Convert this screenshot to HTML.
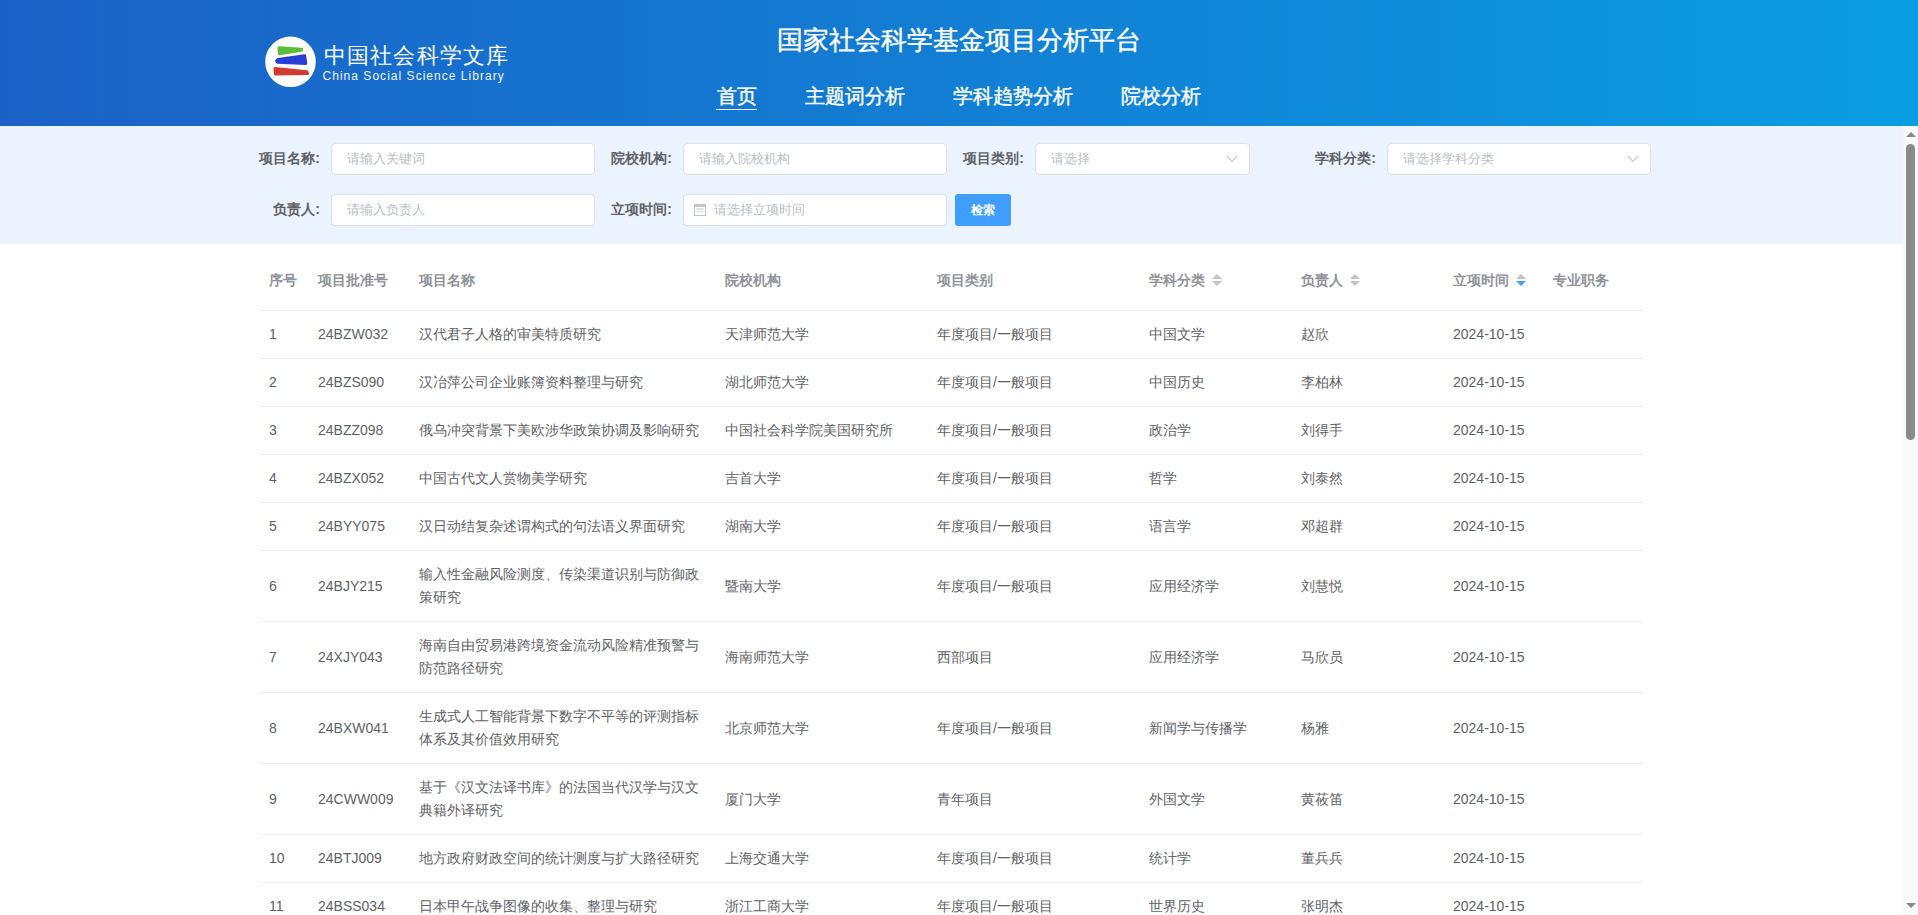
<!DOCTYPE html>
<html><head><meta charset="utf-8">
<style>
*{margin:0;padding:0;box-sizing:border-box}
html,body{width:1918px;height:915px;overflow:hidden;background:#fff;font-family:"Liberation Sans",sans-serif}
.hdr{position:absolute;left:0;top:0;width:1918px;height:126px;background:linear-gradient(90deg,#1b60c6 0%,#0a9de3 100%)}
.logo{position:absolute;left:260px;top:30px;width:70px;height:65px}
.lt1{position:absolute;left:324px;top:41px;font-size:22px;color:#fff;white-space:nowrap;letter-spacing:1.15px}
.lt2{position:absolute;left:322.5px;top:68.5px;font-size:12px;color:#eef4fb;white-space:nowrap;letter-spacing:1.03px}
.title{position:absolute;left:0;width:1918px;top:22.5px;-webkit-text-stroke:0.4px #fff;text-align:center;font-size:26px;color:#fff;white-space:nowrap}
.nav{position:absolute;top:82.5px;font-size:20px;color:#fff;white-space:nowrap;-webkit-text-stroke:0.4px #fff}
.nav.act:after{content:"";position:absolute;left:-1px;right:0;top:26px;height:1.5px;background:#fff}
.main{position:absolute;left:0;top:126px;width:1903px;height:789px;overflow:hidden}
.flt{position:absolute;left:0;top:0;width:1903px;height:118px;background:#ebf3ff}
.lab{position:absolute;font-size:14px;font-weight:bold;color:#606266;white-space:nowrap;text-align:right}
.inp{position:absolute;height:32px;background:#fff;border:1px solid #dcdfe6;border-radius:4px;font-size:13px;color:#b9bdc5;white-space:nowrap;line-height:30px;padding-left:15px}
.btn{position:absolute;height:32px;background:#409eff;border-radius:3px;color:#fff;font-size:12px;font-weight:bold;text-align:center;line-height:32px}
.sbu{position:absolute;left:2.5px;top:5.5px;border:5px solid transparent;border-top:0;border-bottom:5px solid #8a8a8a}
.sbd{position:absolute;left:2.5px;bottom:7.5px;border:5px solid transparent;border-bottom:0;border-top:5px solid #8a8a8a}
.sbt{position:absolute;left:3px;top:18px;width:9px;height:296px;border-radius:5px;background:#8a8a8a}
.sb{position:absolute;left:1903px;top:126px;width:15px;height:789px;background:#f9f9f9}
table{position:absolute;left:259px;top:125px;border-collapse:separate;border-spacing:0;width:1384px;font-size:14px;color:#606266;table-layout:fixed}
th{height:60px;box-sizing:border-box;text-align:left;color:#909399;font-weight:bold;border-bottom:1px solid #ebeef5;padding:0 10px;vertical-align:middle;white-space:nowrap}
td{text-align:left;border-bottom:1px solid #ebeef5;padding:12px 10px;line-height:23px;vertical-align:middle}
.arr{position:absolute;right:11px;top:11px}
.cal{position:absolute;left:10px;top:8px}
.sort{display:inline-block;position:relative;width:10px;height:14px;margin-left:7px;vertical-align:middle}
.sort:before{content:"";position:absolute;left:0;top:0;border:5px solid transparent;border-top:0;border-bottom:5px solid #c0c4cc}
.sort:after{content:"";position:absolute;left:0;top:7px;border:5px solid transparent;border-bottom:0;border-top:5px solid #c0c4cc}
.sort.on:after{border-top-color:#409eff}
</style></head><body>
<div class="hdr">
<svg class="logo" viewBox="0 0 70 65">
<circle cx="30.5" cy="31.8" r="25.3" fill="#fff"/>
<g stroke-linejoin="round" stroke-width="3">
<path d="M18.9 17.8 L41.6 19.2 L41.3 20.2 L19.5 23.8 Z" fill="#5dbe3e" stroke="#5dbe3e"/>
<path d="M18 29.6 L44.6 25.7 L45.8 33.6 L17.5 32.2 Q15.6 30.9 18 29.6 Z" fill="#2a3ed6" stroke="#2a3ed6"/>
<path d="M15 38.5 L47 41.8 L47.5 43.6 L15.3 44 Z" fill="#d23b2f" stroke="#d23b2f"/>
</g>
</svg>
<div class="lt1">中国社会科学文库</div>
<div class="lt2">China Social Science Library</div>
<div class="title">国家社会科学基金项目分析平台</div>
<div class="nav act" style="left:717px">首页</div>
<div class="nav" style="left:805px">主题词分析</div>
<div class="nav" style="left:953px">学科趋势分析</div>
<div class="nav" style="left:1121px">院校分析</div>
</div>
<div class="main">
<div class="flt">
<div class="lab" style="right:1583px;top:24px">项目名称:</div>
<div class="inp" style="left:331px;top:17px;width:264px">请输入关键词</div>
<div class="lab" style="right:1231px;top:24px">院校机构:</div>
<div class="inp" style="left:683px;top:17px;width:264px">请输入院校机构</div>
<div class="lab" style="right:879px;top:24px">项目类别:</div>
<div class="inp" style="left:1035px;top:17px;width:215px">请选择<svg class="arr" width="12" height="8" viewBox="0 0 12 8"><polyline points="0.7,1 6,6.3 11.3,1" stroke="#c0c4cc" stroke-width="1.1" fill="none"/></svg></div>
<div class="lab" style="right:527px;top:24px">学科分类:</div>
<div class="inp" style="left:1387px;top:17px;width:264px">请选择学科分类<svg class="arr" width="12" height="8" viewBox="0 0 12 8"><polyline points="0.7,1 6,6.3 11.3,1" stroke="#c0c4cc" stroke-width="1.1" fill="none"/></svg></div>
<div class="lab" style="right:1583px;top:75px">负责人:</div>
<div class="inp" style="left:331px;top:68px;width:264px">请输入负责人</div>
<div class="lab" style="right:1231px;top:75px">立项时间:</div>
<div class="inp" style="left:683px;top:68px;width:264px;padding-left:30px"><svg class="cal" width="13" height="13" viewBox="0 0 13 13"><rect x="0.5" y="1.5" width="11" height="11" fill="none" stroke="#c0c4cc" stroke-width="1"/><rect x="0.5" y="1.5" width="11" height="2.5" fill="#c0c4cc"/><line x1="3" y1="0.5" x2="3" y2="2" stroke="#c0c4cc"/><line x1="9" y1="0.5" x2="9" y2="2" stroke="#c0c4cc"/><rect x="2.5" y="5.5" width="7" height="1" fill="#c0c4cc"/><rect x="2.5" y="8" width="7" height="1.2" fill="#d8dbe0"/></svg>请选择立项时间</div>
<div class="btn" style="left:955px;top:68px;width:56px">检索</div>
</div>
<table cellspacing="0" cellpadding="0">
<colgroup><col style="width:49px"><col style="width:101px"><col style="width:306px"><col style="width:212px"><col style="width:212px"><col style="width:152px"><col style="width:152px"><col style="width:100px"><col style="width:100px"></colgroup>
<thead><tr><th>序号</th><th>项目批准号</th><th>项目名称</th><th>院校机构</th><th>项目类别</th><th>学科分类<i class="sort"></i></th><th>负责人<i class="sort"></i></th><th>立项时间<i class="sort on"></i></th><th>专业职务</th></tr></thead>
<tbody>
<tr><td>1</td><td>24BZW032</td><td>汉代君子人格的审美特质研究</td><td>天津师范大学</td><td>年度项目/一般项目</td><td>中国文学</td><td>赵欣</td><td>2024-10-15</td><td></td></tr>
<tr><td>2</td><td>24BZS090</td><td>汉冶萍公司企业账簿资料整理与研究</td><td>湖北师范大学</td><td>年度项目/一般项目</td><td>中国历史</td><td>李柏林</td><td>2024-10-15</td><td></td></tr>
<tr><td>3</td><td>24BZZ098</td><td>俄乌冲突背景下美欧涉华政策协调及影响研究</td><td>中国社会科学院美国研究所</td><td>年度项目/一般项目</td><td>政治学</td><td>刘得手</td><td>2024-10-15</td><td></td></tr>
<tr><td>4</td><td>24BZX052</td><td>中国古代文人赏物美学研究</td><td>吉首大学</td><td>年度项目/一般项目</td><td>哲学</td><td>刘泰然</td><td>2024-10-15</td><td></td></tr>
<tr><td>5</td><td>24BYY075</td><td>汉日动结复杂述谓构式的句法语义界面研究</td><td>湖南大学</td><td>年度项目/一般项目</td><td>语言学</td><td>邓超群</td><td>2024-10-15</td><td></td></tr>
<tr><td>6</td><td>24BJY215</td><td>输入性金融风险测度、传染渠道识别与防御政策研究</td><td>暨南大学</td><td>年度项目/一般项目</td><td>应用经济学</td><td>刘慧悦</td><td>2024-10-15</td><td></td></tr>
<tr><td>7</td><td>24XJY043</td><td>海南自由贸易港跨境资金流动风险精准预警与防范路径研究</td><td>海南师范大学</td><td>西部项目</td><td>应用经济学</td><td>马欣员</td><td>2024-10-15</td><td></td></tr>
<tr><td>8</td><td>24BXW041</td><td>生成式人工智能背景下数字不平等的评测指标体系及其价值效用研究</td><td>北京师范大学</td><td>年度项目/一般项目</td><td>新闻学与传播学</td><td>杨雅</td><td>2024-10-15</td><td></td></tr>
<tr><td>9</td><td>24CWW009</td><td>基于《汉文法译书库》的法国当代汉学与汉文典籍外译研究</td><td>厦门大学</td><td>青年项目</td><td>外国文学</td><td>黄莜笛</td><td>2024-10-15</td><td></td></tr>
<tr><td>10</td><td>24BTJ009</td><td>地方政府财政空间的统计测度与扩大路径研究</td><td>上海交通大学</td><td>年度项目/一般项目</td><td>统计学</td><td>董兵兵</td><td>2024-10-15</td><td></td></tr>
<tr><td>11</td><td>24BSS034</td><td>日本甲午战争图像的收集、整理与研究</td><td>浙江工商大学</td><td>年度项目/一般项目</td><td>世界历史</td><td>张明杰</td><td>2024-10-15</td><td></td></tr>
<tr><td>12</td><td>24BZS091</td><td>近代中国地方财政研究</td><td>南京大学</td><td>年度项目/一般项目</td><td>中国历史</td><td>王某</td><td>2024-10-15</td><td></td></tr>
</tbody></table>
</div>
<div class="sb"><i class="sbu"></i><i class="sbt"></i><i class="sbd"></i></div>
</body></html>
